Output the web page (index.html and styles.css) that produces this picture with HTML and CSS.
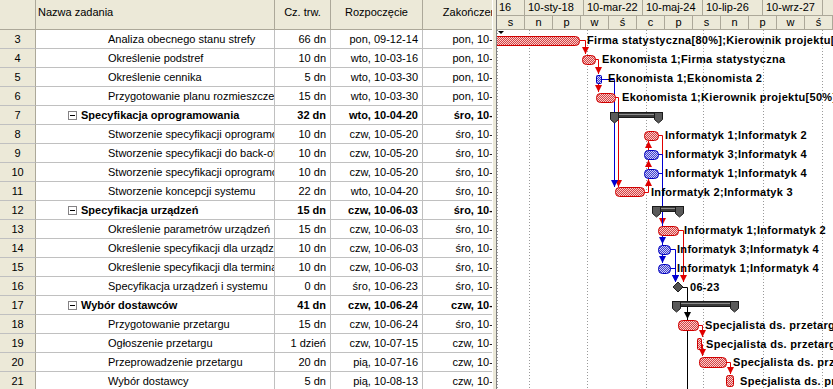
FILE: index.html
```html
<!DOCTYPE html>
<html lang="pl">
<head>
    <meta charset="UTF-8">
    <title>Wykres Gantta</title>
    <link rel="stylesheet" href="styles.css">
</head>
<body>
<div class="app">
    <div class="sheet">
        <div class="row head">
            <div class="id"></div>
            <div class="name">Nazwa zadania</div>
            <div class="dur">Cz. trw.</div>
            <div class="start">Rozpoczęcie</div>
            <div class="end">Zakończenie</div>
        </div>
        <div class="row task"><div class="id">3</div><div class="name">Analiza obecnego stanu strefy</div><div class="dur">66 dn</div><div class="start">pon, 09-12-14</div><div class="end">pon, 10-03-15</div></div>
        <div class="row task"><div class="id">4</div><div class="name">Określenie podstref</div><div class="dur">10 dn</div><div class="start">wto, 10-03-16</div><div class="end">pon, 10-03-29</div></div>
        <div class="row task"><div class="id">5</div><div class="name">Określenie cennika</div><div class="dur">5 dn</div><div class="start">wto, 10-03-30</div><div class="end">pon, 10-04-05</div></div>
        <div class="row task"><div class="id">6</div><div class="name">Przygotowanie planu rozmieszczenia</div><div class="dur">15 dn</div><div class="start">wto, 10-03-30</div><div class="end">pon, 10-04-19</div></div>
        <div class="row sum"><div class="id">7</div><div class="name"><span class="box"></span>Specyfikacja oprogramowania</div><div class="dur">32 dn</div><div class="start">wto, 10-04-20</div><div class="end">śro, 10-06-02</div></div>
        <div class="row task"><div class="id">8</div><div class="name">Stworzenie specyfikacji oprogramowania</div><div class="dur">10 dn</div><div class="start">czw, 10-05-20</div><div class="end">śro, 10-06-02</div></div>
        <div class="row task"><div class="id">9</div><div class="name">Stworzenie specyfikacji do back-office</div><div class="dur">10 dn</div><div class="start">czw, 10-05-20</div><div class="end">śro, 10-06-02</div></div>
        <div class="row task"><div class="id">10</div><div class="name">Stworzenie specyfikacji oprogramowania</div><div class="dur">10 dn</div><div class="start">czw, 10-05-20</div><div class="end">śro, 10-06-02</div></div>
        <div class="row task"><div class="id">11</div><div class="name">Stworzenie koncepcji systemu</div><div class="dur">22 dn</div><div class="start">wto, 10-04-20</div><div class="end">śro, 10-05-19</div></div>
        <div class="row sum"><div class="id">12</div><div class="name"><span class="box"></span>Specyfikacja urządzeń</div><div class="dur">15 dn</div><div class="start">czw, 10-06-03</div><div class="end">śro, 10-06-23</div></div>
        <div class="row task"><div class="id">13</div><div class="name">Określenie parametrów urządzeń</div><div class="dur">15 dn</div><div class="start">czw, 10-06-03</div><div class="end">śro, 10-06-23</div></div>
        <div class="row task"><div class="id">14</div><div class="name">Określenie specyfikacji dla urządzeń</div><div class="dur">10 dn</div><div class="start">czw, 10-06-03</div><div class="end">śro, 10-06-16</div></div>
        <div class="row task"><div class="id">15</div><div class="name">Określenie specyfikacji dla terminali</div><div class="dur">10 dn</div><div class="start">czw, 10-06-03</div><div class="end">śro, 10-06-16</div></div>
        <div class="row task"><div class="id">16</div><div class="name">Specyfikacja urządzeń i systemu</div><div class="dur">0 dn</div><div class="start">śro, 10-06-23</div><div class="end">śro, 10-06-23</div></div>
        <div class="row sum"><div class="id">17</div><div class="name"><span class="box"></span>Wybór dostawców</div><div class="dur">41 dn</div><div class="start">czw, 10-06-24</div><div class="end">czw, 10-08-19</div></div>
        <div class="row task"><div class="id">18</div><div class="name">Przygotowanie przetargu</div><div class="dur">15 dn</div><div class="start">czw, 10-06-24</div><div class="end">śro, 10-07-14</div></div>
        <div class="row task"><div class="id">19</div><div class="name">Ogłoszenie przetargu</div><div class="dur">1 dzień</div><div class="start">czw, 10-07-15</div><div class="end">czw, 10-07-15</div></div>
        <div class="row task"><div class="id">20</div><div class="name">Przeprowadzenie przetargu</div><div class="dur">20 dn</div><div class="start">pią, 10-07-16</div><div class="end">czw, 10-08-12</div></div>
        <div class="row task"><div class="id">21</div><div class="name">Wybór dostawcy</div><div class="dur">5 dn</div><div class="start">pią, 10-08-13</div><div class="end">czw, 10-08-19</div></div>
    </div>
    <div class="split"></div>
    <div class="gantt">
        <div class="tier top">
            <span class="w28">16</span><span class="w59">10-sty-18</span><span class="w59">10-mar-22</span><span class="w60">10-maj-24</span><span class="w60">10-lip-26</span><span class="w60">10-wrz-27</span><span class="w10"></span>
        </div>
        <div class="tier bot">
            <span>s</span><span>n</span><span>p</span><span>w</span><span>ś</span><span>c</span><span>p</span><span>s</span><span>n</span><span>p</span><span>w</span><span>ś</span>
        </div>
        <svg class="chart" width="336" height="359" viewBox="0 0 336 359">
            <defs>
                <pattern id="hatchRed" width="2" height="2" patternUnits="userSpaceOnUse">
                    <rect width="2" height="2" fill="#f6d0d0"/>
                    <rect width="1" height="1" fill="#d84040"/>
                    <rect x="1" y="1" width="1" height="1" fill="#d84040"/>
                </pattern>
                <pattern id="hatchBlue" width="2" height="2" patternUnits="userSpaceOnUse">
                    <rect width="2" height="2" fill="#d0d0f6"/>
                    <rect width="1" height="1" fill="#4040d0"/>
                    <rect x="1" y="1" width="1" height="1" fill="#4040d0"/>
                </pattern>
                <marker id="arRed" viewBox="0 0 8 8" refX="8" refY="4" markerWidth="7" markerHeight="7" orient="auto" markerUnits="userSpaceOnUse">
                    <path d="M0,0 L8,4 L0,8 Z" fill="#e00000"/>
                </marker>
                <marker id="arBlue" viewBox="0 0 8 8" refX="8" refY="4" markerWidth="7" markerHeight="7" orient="auto" markerUnits="userSpaceOnUse">
                    <path d="M0,0 L8,4 L0,8 Z" fill="#0000d0"/>
                </marker>
                <marker id="arBlack" viewBox="0 0 8 8" refX="8" refY="4" markerWidth="7" markerHeight="7" orient="auto" markerUnits="userSpaceOnUse">
                    <path d="M0,0 L8,4 L0,8 Z" fill="#000"/>
                </marker>
            </defs>

            <!-- grid -->
            <g class="grid">
                <line x1="0.5" y1="0" x2="0.5" y2="359"/>
                <line x1="32.5" y1="0" x2="32.5" y2="359"/>
                <line x1="90.5" y1="0" x2="90.5" y2="359"/>
                <line x1="149.5" y1="0" x2="149.5" y2="359"/>
                <line x1="206.5" y1="0" x2="206.5" y2="359"/>
                <line x1="266.5" y1="0" x2="266.5" y2="359"/>
                <line x1="325.5" y1="0" x2="325.5" y2="359"/>
            </g>

            <polygon points="1,1 7,1 4,4" fill="#000"/>

            <!-- links -->
            <g class="link red">
                <polyline points="83,10.5 88.5,10.5 88.5,24" marker-end="url(#arRed)"/>
                <polyline points="98,29.5 101.5,29.5 101.5,44" marker-end="url(#arRed)"/>
                <polyline points="101.5,53 101.5,62" marker-end="url(#arRed)"/>
                <polyline points="118,67.5 121.5,67.5 121.5,157" marker-end="url(#arRed)"/>
                <polyline points="147,162.5 151.5,162.5 151.5,111" marker-end="url(#arRed)"/>
                <polyline points="151.5,140 151.5,130" marker-end="url(#arRed)"/>
                <polyline points="151.5,158 151.5,149" marker-end="url(#arRed)"/>
                <polyline points="161,105.5 165.5,105.5 165.5,195" marker-end="url(#arRed)"/>
                <polyline points="181,200.5 186.5,200.5 186.5,252" marker-end="url(#arRed)"/>
                <polyline points="201,295.5 205.5,295.5 205.5,307" marker-end="url(#arRed)"/>
                <polyline points="204,314.5 205.5,314.5 205.5,326" marker-end="url(#arRed)"/>
                <polyline points="229,332.5 233.5,332.5 233.5,344" marker-end="url(#arRed)"/>
            </g>
            <g class="link blue">
                <polyline points="104,49.5 117.5,49.5 117.5,157" marker-end="url(#arBlue)"/>
                <polyline points="161,124.5 165.5,124.5 165.5,214" marker-end="url(#arBlue)"/>
                <polyline points="161,143.5 165.5,143.5 165.5,233" marker-end="url(#arBlue)"/>
                <polyline points="173,219.5 178.5,219.5 178.5,252" marker-end="url(#arBlue)"/>
                <polyline points="173,238.5 178.5,238.5 178.5,252" marker-end="url(#arBlue)"/>
            </g>
            <g class="link black">
                <polyline points="186,257.5 190.5,257.5 190.5,289" marker-end="url(#arBlack)"/>
                <line x1="190.5" y1="289" x2="190.5" y2="359"/>
            </g>

            <!-- bars -->
            <g class="bar red">
                <rect x="-5.5" y="6.5" width="88" height="9" rx="4"/>
                <rect x="85.5" y="25.5" width="13" height="9" rx="4"/>
                <rect x="99.5" y="63.5" width="19" height="9" rx="4"/>
                <rect x="147.5" y="101.5" width="14" height="9" rx="4"/>
                <rect x="118.5" y="157.5" width="29" height="9" rx="4"/>
                <rect x="161.5" y="196.5" width="20" height="9" rx="4"/>
                <rect x="181.5" y="290.5" width="20" height="10" rx="4"/>
                <rect x="200.5" y="308.5" width="4" height="11" rx="1"/>
                <rect x="202.5" y="327.5" width="27" height="10" rx="4"/>
                <rect x="229.5" y="345.5" width="7" height="11" rx="2"/>
            </g>
            <g class="bar blue">
                <rect x="99.5" y="45.5" width="5" height="8" rx="1"/>
                <rect x="147.5" y="120.5" width="14" height="9" rx="4"/>
                <rect x="147.5" y="139.5" width="14" height="9" rx="4"/>
                <rect x="161.5" y="215.5" width="12" height="9" rx="4"/>
                <rect x="161.5" y="234.5" width="12" height="9" rx="4"/>
            </g>

            <!-- summary bars -->
            <g class="summary">
                <rect x="113.5" y="82.5" width="52" height="5"/>
                <line class="shine" x1="115" y1="84.5" x2="164" y2="84.5"/>
                <polygon points="113.5,82.5 121.5,82.5 121.5,89.5 117.5,93 113.5,89.5"/>
                <polygon points="157.5,82.5 165.5,82.5 165.5,89.5 161.5,93 157.5,89.5"/>

                <rect x="155.5" y="176.5" width="31" height="5"/>
                <line class="shine" x1="157" y1="178.5" x2="185" y2="178.5"/>
                <polygon points="155.5,176.5 163.5,176.5 163.5,183.5 159.5,187 155.5,183.5"/>
                <polygon points="178.5,176.5 186.5,176.5 186.5,183.5 182.5,187 178.5,183.5"/>

                <rect x="175.5" y="271.5" width="66" height="5"/>
                <line class="shine" x1="177" y1="273.5" x2="240" y2="273.5"/>
                <polygon points="175.5,271.5 183.5,271.5 183.5,278.5 179.5,282 175.5,278.5"/>
                <polygon points="233.5,271.5 241.5,271.5 241.5,278.5 237.5,282 233.5,278.5"/>
            </g>

            <polygon class="milestone" points="181,252 186,257 181,262 176,257"/>

            <!-- labels -->
            <g class="lbl">
                <text x="90" y="14">Firma statystyczna[80%];Kierownik projektu[80%]</text>
                <text x="105" y="33">Ekonomista 1;Firma statystyczna</text>
                <text x="111" y="52">Ekonomista 1;Ekonomista 2</text>
                <text x="125" y="71">Ekonomista 1;Kierownik projektu[50%]</text>
                <text x="168" y="109">Informatyk 1;Informatyk 2</text>
                <text x="168" y="128">Informatyk 3;Informatyk 4</text>
                <text x="168" y="147">Informatyk 1;Informatyk 4</text>
                <text x="154" y="166">Informatyk 2;Informatyk 3</text>
                <text x="187" y="204">Informatyk 1;Informatyk 2</text>
                <text x="180" y="223">Informatyk 3;Informatyk 4</text>
                <text x="180" y="242">Informatyk 1;Informatyk 4</text>
                <text x="193" y="261">06-23</text>
                <text x="208" y="299">Specjalista ds. przetargów</text>
                <text x="209" y="318">Specjalista ds. przetargów</text>
                <text x="236" y="336">Specjalista ds. przetargów</text>
                <text x="243" y="355">Specjalista ds. przetargów</text>
            </g>
        </svg>
    </div>
</div>
</body>
</html>
```

FILE: styles.css
```css
body {
    margin: 0;
    font: 11px "Liberation Sans", Arial, sans-serif;
    color: #000;
    background: #fff;
    overflow: hidden;
}
.app {
    display: flex;
    height: 389px;
}
.sheet {
    flex: none;
    width: 492px;
    overflow: hidden;
}
.row {
    display: grid;
    grid-template-columns: 36px 239px 56px 92px 103px;
    height: 19px;
}
.row > div {
    box-sizing: border-box;
    border-right: 1px solid #c0c0c0;
    border-bottom: 1px solid #c0c0c0;
    white-space: nowrap;
    overflow: hidden;
    line-height: 18px;
}
.row .id {
    background: #ece9d8;
    text-align: center;
    border-right-color: #aca899;
    font-weight: normal;
}
.row .dur,
.row .start,
.row .end {
    text-align: right;
    padding-right: 4px;
}
.task .name {
    padding-left: 72px;
}
.sum {
    font-weight: bold;
}
.sum .name {
    padding-left: 32px;
}
.box {
    display: inline-block;
    position: relative;
    width: 9px;
    height: 9px;
    box-sizing: border-box;
    border: 1px solid #848284;
    background: #fff;
    margin-right: 4px;
    vertical-align: -1px;
}
.box::after {
    content: "";
    position: absolute;
    left: 1px;
    top: 3px;
    width: 5px;
    height: 1px;
    background: #000;
}
.head {
    height: 30px;
    background: #ece9d8;
}
.head > div {
    line-height: 16px;
    padding-top: 4px;
    text-align: center;
    border-right-color: #aca899;
    border-bottom-color: #aca899;
}
.head .name {
    text-align: left;
    padding-left: 2px;
}
.head .dur,
.head .start,
.head .end {
    text-align: center;
    padding-right: 0;
}
.split {
    flex: none;
    width: 5px;
    box-sizing: border-box;
    background: #ece9d8;
    border-left: 1px solid #fff;
    border-right: 1px solid #808080;
}
.gantt {
    flex: none;
    width: 336px;
    overflow: hidden;
}
.tier {
    display: flex;
    height: 16px;
    box-sizing: border-box;
    background: #ece9d8;
    border-bottom: 1px solid #aca899;
}
.tier span {
    flex: none;
    box-sizing: border-box;
    border-right: 1px solid #aca899;
    white-space: nowrap;
    overflow: hidden;
}
.tier.top span {
    padding-left: 3px;
    line-height: 15px;
}
.tier.top .w28 { width: 28px; padding-left: 2px; }
.tier.top .w59 { width: 59px; }
.tier.top .w60 { width: 60px; }
.tier.top .w10 { width: 10px; border-right: none; }
.tier.bot {
    height: 14px;
}
.tier.bot span {
    width: 28px;
    text-align: center;
    line-height: 12px;
}
.chart {
    display: block;
}
.grid line {
    stroke: #9a9a9a;
    stroke-dasharray: 1 2;
}
.link polyline,
.link line {
    fill: none;
    stroke-width: 1;
}
.link.red polyline { stroke: #e00000; }
.link.blue polyline { stroke: #0000d0; }
.link.black polyline,
.link.black line { stroke: #000; }
.bar.red rect {
    fill: url(#hatchRed);
    stroke: #d00000;
}
.bar.blue rect {
    fill: url(#hatchBlue);
    stroke: #0000c0;
}
.summary rect,
.summary polygon {
    fill: #3a3a3a;
    stroke: #1a1a1a;
}
.summary polygon {
    fill: #5a5a5a;
}
.summary .shine {
    stroke: #8c8c8c;
}
.milestone {
    fill: #505050;
    stroke: #202020;
}
.lbl text {
    font: bold 11px "Liberation Sans", Arial, sans-serif;
    letter-spacing: 0.3px;
    fill: #000;
}
```
